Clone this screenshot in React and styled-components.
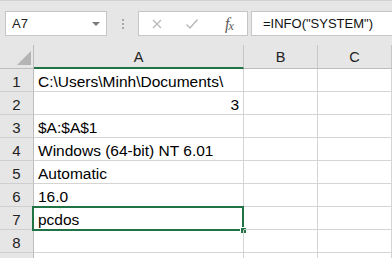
import React from "react";
import styled, { createGlobalStyle } from "styled-components";

const Global = createGlobalStyle`
  html, body { margin: 0; padding: 0; background: #e6e6e6; overflow: hidden; }
  body { font-family: "Liberation Sans", Arial, sans-serif; color: #000; }
`;

const Page = styled.div`
  width: 392px;
  height: 258px;
  overflow: hidden;
  display: flex;
  flex-direction: column;
  background: #e6e6e6;
`;

const TopStrip = styled.div`
  height: 2px;
  background: #f1f1f1;
  border-bottom: 1px solid #d2d2d2;
`;

const FormulaRow = styled.div`
  display: flex;
  align-items: center;
  height: 25px;
  margin-top: 10px;
  margin-bottom: 9px;
  padding-left: 5px;
`;

const Field = styled.div`
  box-sizing: border-box;
  height: 25px;
  background: #fff;
  border: 1px solid #c6c6c6;
  display: flex;
  align-items: center;
  font-size: 13px;
  color: #222;
`;

const NameBox = styled(Field)`
  width: 102px;
  padding-left: 6px;
  justify-content: space-between;
  padding-right: 6px;
`;

const Caret = styled.span`
  width: 0;
  height: 0;
  border-left: 4px solid transparent;
  border-right: 4px solid transparent;
  border-top: 4px solid #7a7a7a;
  margin-top: 1px;
`;

const Grip = styled.div`
  width: 31px;
  display: flex;
  flex-direction: column;
  align-items: center;
  gap: 2px;
  span {
    width: 2px;
    height: 2px;
    background: #a6a6a6;
  }
`;

const FuncBox = styled(Field)`
  width: 110px;
  position: relative;
`;

const FuncIcon = styled.span`
  position: absolute;
  top: 50%;
  transform: translate(-50%, -50%);
  left: ${(p) => p.$x}px;
  display: flex;
`;

const Fx = styled.span`
  font-family: "Liberation Serif", "Times New Roman", serif;
  font-style: italic;
  font-size: 16px;
  color: #5a5a5a;
  letter-spacing: -1px;
  sub {
    font-size: 12px;
    vertical-align: -1px;
  }
`;

const FormulaInput = styled(Field)`
  flex: 1;
  margin-left: 3px;
  border-right: none;
  padding-left: 11px;
  font-size: 13px;
  color: #111;
`;

const Grid = styled.div`
  display: grid;
  grid-template-columns: 34px 210px 74px 1fr;
  grid-auto-rows: 23px;
  grid-template-rows: 24px;
  background: #fff;
`;

const Corner = styled.div`
  background: #e6e6e6;
  border-right: 1px solid #bdbdbd;
  border-bottom: 1px solid #bdbdbd;
  position: relative;
  svg { position: absolute; right: 2px; bottom: 3px; }
`;

const ColHead = styled.div`
  box-sizing: border-box;
  background: #e6e6e6;
  border-right: 1px solid #c6c6c6;
  border-bottom: ${(p) => (p.$active ? "2px solid #217346" : "1px solid #bdbdbd")};
  display: flex;
  align-items: center;
  justify-content: center;
  font-size: 14.5px;
  color: #222;
  padding-top: ${(p) => (p.$active ? "2px" : "1px")};
`;

const RowHead = styled.div`
  box-sizing: border-box;
  background: #e6e6e6;
  border-right: 1px solid #bdbdbd;
  border-bottom: 1px solid #cfcfcf;
  text-align: center;
  font-size: 15px;
  line-height: 18px;
  padding-top: 4px;
  color: #222;
`;

const Cell = styled.div`
  box-sizing: border-box;
  position: relative;
  border-right: 1px solid #d4d4d4;
  border-bottom: 1px solid #d4d4d4;
  font-size: 15.5px;
  line-height: 18px;
  padding: 4px 4px 0 4px;
  white-space: nowrap;
  text-align: ${(p) => (p.$right ? "right" : "left")};
`;

const Selection = styled.div`
  position: absolute;
  left: -2px;
  right: -1px;
  top: -1px;
  bottom: -2px;
  border: 2px solid #217346;
  pointer-events: none;
`;

const Handle = styled.div`
  position: absolute;
  right: -5px;
  bottom: -5px;
  width: 5px;
  height: 5px;
  background: #217346;
  border: 1px solid #fff;
`;

const rows = [
  { v: "C:\\Users\\Minh\\Documents\\" },
  { v: "3", right: true },
  { v: "$A:$A$1" },
  { v: "Windows (64-bit) NT 6.01" },
  { v: "Automatic" },
  { v: "16.0" },
  { v: "pcdos", sel: true },
  { v: "" },
  { v: "", hideNum: true },
];

export default function App() {
  return (
    <>
      <Global />
      <Page>
        <TopStrip />
        <FormulaRow>
          <NameBox>
            <span>A7</span>
            <Caret />
          </NameBox>
          <Grip>
            <span />
            <span />
            <span />
          </Grip>
          <FuncBox>
            <FuncIcon $x={18}>
              <svg width="10" height="10" viewBox="0 0 10 10">
                <path d="M1 1 L9 9 M9 1 L1 9" stroke="#b8b8b8" strokeWidth="1.3" fill="none" />
              </svg>
            </FuncIcon>
            <FuncIcon $x={53}>
              <svg width="13" height="11" viewBox="0 0 13 11">
                <path d="M1 6 L4.5 9.5 L12 1" stroke="#b8b8b8" strokeWidth="1.4" fill="none" />
              </svg>
            </FuncIcon>
            <FuncIcon $x={90}>
              <Fx>
                f<sub>x</sub>
              </Fx>
            </FuncIcon>
          </FuncBox>
          <FormulaInput>=INFO("SYSTEM")</FormulaInput>
        </FormulaRow>
        <Grid>
          <Corner>
            <svg width="14" height="14" viewBox="0 0 14 14">
              <path d="M14 0 L14 14 L0 14 Z" fill="#b4b4b4" />
            </svg>
          </Corner>
          <ColHead $active>A</ColHead>
          <ColHead>B</ColHead>
          <ColHead>C</ColHead>
          {rows.map((r, i) => (
            <React.Fragment key={i}>
              <RowHead>{r.hideNum ? "" : i + 1}</RowHead>
              <Cell $right={r.right}>
                {r.v}
                {r.sel && (
                  <Selection>
                    <Handle />
                  </Selection>
                )}
              </Cell>
              <Cell />
              <Cell />
            </React.Fragment>
          ))}
        </Grid>
      </Page>
    </>
  );
}
